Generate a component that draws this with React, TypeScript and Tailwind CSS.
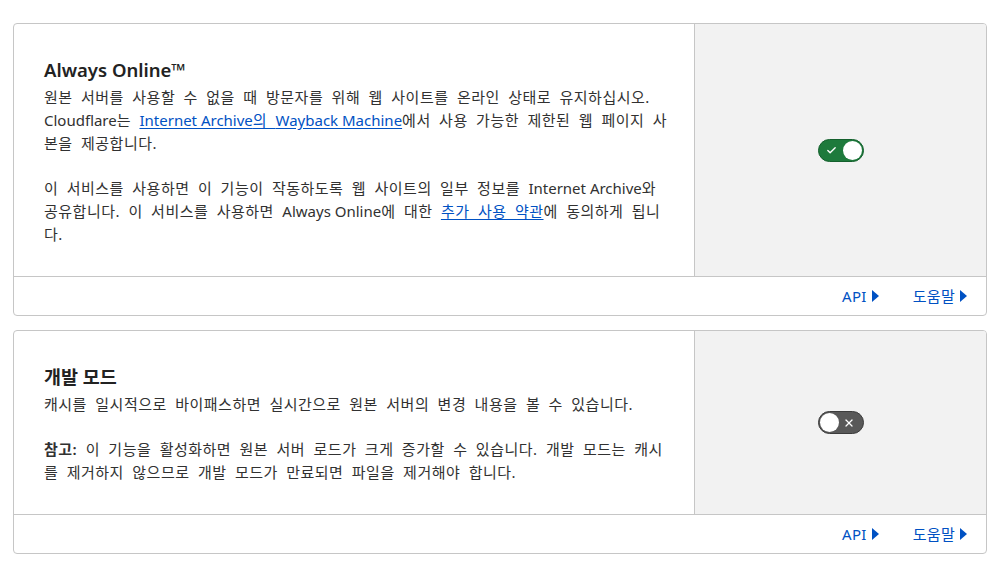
import { Check, X } from 'lucide-react'

const font = { fontFamily: '"Noto Sans", "Noto Sans CJK KR", sans-serif' }

function Toggle({ on }: { on: boolean }) {
  if (on) {
    return (
      <div className="w-[46px] h-[23px] rounded-full bg-[#1e7a3c] border border-[#14602d] flex items-center justify-between pl-[7px] pr-[1px]">
        <Check className="w-[11px] h-[11px] text-white" strokeWidth={3} />
        <div className="w-[19px] h-[19px] rounded-full bg-white" />
      </div>
    )
  }
  return (
    <div className="w-[46px] h-[23px] rounded-full bg-[#595959] border border-[#3c3c3c] flex items-center justify-between pl-[1px] pr-[8px]">
      <div className="w-[19px] h-[19px] rounded-full bg-white" />
      <X className="w-[12px] h-[12px] text-white" strokeWidth={2.5} />
    </div>
  )
}

function Caret() {
  return (
    <svg width="7" height="12" viewBox="0 0 7 12" className="ml-[5px]">
      <path d="M0 0 L7 6 L0 12 Z" fill="#0051c3" />
    </svg>
  )
}

// latin runs keep normal spacing; the extra spacing is only for hangul
function L({ children }: { children: React.ReactNode }) {
  return <span className="tracking-normal [word-spacing:0px]">{children}</span>
}

function Card({ on, children }: { on: boolean; children: React.ReactNode }) {
  return (
    <div className="border border-[#c6c6c6] rounded-[4px] bg-white overflow-hidden">
      <div className="flex">
        <div className="w-[680px] shrink-0 pl-[30px] pr-[22px] pt-[33px] pb-[30px]">{children}</div>
        <div className="flex-1 bg-[#f2f2f2] border-l border-[#c6c6c6] flex items-center justify-center">
          <Toggle on={on} />
        </div>
      </div>
      <div className="h-[39px] border-t border-[#c6c6c6] flex items-center justify-end pr-[19px] gap-[34px] text-[15px] tracking-[0.3px] text-[#0051c3]">
        <span className="flex items-center">API<Caret /></span>
        <span className="flex items-center">도움말<Caret /></span>
      </div>
    </div>
  )
}

const body = 'text-[15px] leading-[23px] tracking-[0.5px] [word-spacing:4px]'
const link = 'text-[#0051c3] underline underline-offset-2'

export default function App() {
  return (
    <div className="min-h-screen bg-white px-[13px] pt-[23px] flex flex-col gap-[14px] text-[#313131]" style={font}>
      <Card on>
        <h2 className="text-[18.5px] font-semibold leading-[26px] text-[#222]">Always Online™</h2>
        <p className={`${body} mt-[3px]`}>
          원본 서버를 사용할 수 없을 때 방문자를 위해 웹 사이트를 온라인 상태로 유지하십시오. <L>Cloudflare</L>는{' '}
          <a className={link}><L>Internet Archive</L>의 <L>Wayback Machine</L></a>에서 사용 가능한 제한된 웹 페이지 사본을 제공합니다.
        </p>
        <p className={`${body} mt-[22px]`}>
          이 서비스를 사용하면 이 기능이 작동하도록 웹 사이트의 일부 정보를 <L>Internet Archive</L>와 공유합니다. 이 서비스를 사용하면 <L>Always Online</L>에 대한{' '}
          <a className={link}>추가 사용 약관</a>에 동의하게 됩니다.
        </p>
      </Card>
      <Card on={false}>
        <h2 className="text-[18.5px] font-semibold leading-[26px] text-[#222]">개발 모드</h2>
        <p className={`${body} mt-[3px]`}>
          캐시를 일시적으로 바이패스하면 실시간으로 원본 서버의 변경 내용을 볼 수 있습니다.
        </p>
        <p className={`${body} mt-[22px]`}>
          <b className="font-semibold">참고:</b> 이 기능을 활성화하면 원본 서버 로드가 크게 증가할 수 있습니다. 개발 모드는 캐시를 제거하지 않으므로 개발 모드가 만료되면 파일을 제거해야 합니다.
        </p>
      </Card>
    </div>
  )
}
